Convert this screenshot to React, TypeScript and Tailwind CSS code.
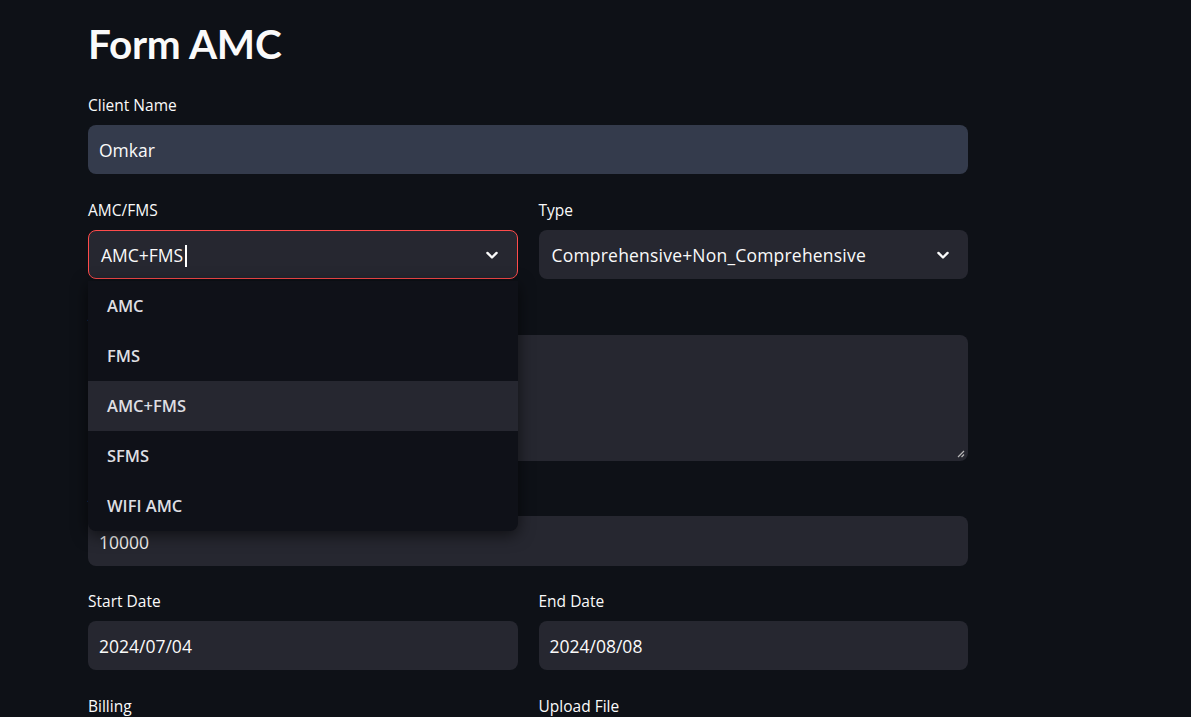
import React from 'react';

const options = ['AMC', 'FMS', 'AMC+FMS', 'SFMS', 'WIFI AMC'];

const Label: React.FC<{ text: string }> = ({ text }) => (
  <div className="h-6 flex items-center pt-[2px] text-[15.5px] text-[#fafafa] mb-2">{text}</div>
);

const Chevron: React.FC = () => (
  <svg width="20" height="20" viewBox="0 0 24 24" fill="none" stroke="#fafafa" strokeWidth="2.8" strokeLinecap="round" strokeLinejoin="round">
    <path d="M6.5 9.5l5.5 5.5 5.5-5.5" />
  </svg>
);

const App: React.FC = () => {
  return (
    <div className="min-h-[717px] w-full bg-[#0e1117] text-[#fafafa] overflow-hidden" style={{ fontFamily: '"Open Sans", "Noto Sans", sans-serif' }}>
      <div className="ml-[88px] w-[880px] pt-[14px] flex flex-col">
        <h1 className="text-[40.5px] font-bold leading-[60px] tracking-[-0.2px] mb-[19px]" style={{ fontFamily: 'Lato, sans-serif' }}>Form AMC</h1>

        <Label text="Client Name" />
        <div className="h-[49px] rounded-lg bg-[#343b4c] flex items-center pt-[2px] px-[11px] text-[17.5px]">Omkar</div>

        <div className="grid grid-cols-2 gap-x-[21px] mt-6">
          <div className="relative z-10">
            <Label text="AMC/FMS" />
            <div className="h-[49px] rounded-lg bg-[#262730] border border-[#ff4b4b] flex items-center justify-between pl-3 pr-[15px] text-[17.5px]">
              <div className="flex items-center pt-[2px]">
                <span>AMC+FMS</span>
                <span className="w-[1.5px] h-[22px] bg-white ml-[2px]" />
              </div>
              <Chevron />
            </div>
            <div className="absolute left-0 right-0 top-full mt-[2px] bg-[#0f1118] rounded-b-lg shadow-[0_4px_16px_rgba(0,0,0,0.6)] overflow-hidden">
              {options.map((o) => (
                <div
                  key={o}
                  className={`h-[50px] flex items-center pl-[19px] text-[16.5px] font-semibold text-[#dedee2] ${o === 'AMC+FMS' ? 'bg-[#262730]' : ''}`}
                >
                  {o}
                </div>
              ))}
            </div>
          </div>
          <div>
            <Label text="Type" />
            <div className="h-[49px] rounded-lg bg-[#262730] flex items-center justify-between pl-[13px] pr-[15px] text-[17.5px] tracking-[0.2px]">
              <span className="pt-[2px]">Comprehensive+Non_Comprehensive</span>
              <Chevron />
            </div>
          </div>
        </div>

        <div className="mt-6">
          <Label text="Address" />
          <div className="relative h-[126px] rounded-lg bg-[#262730]">
            <svg className="absolute right-[3px] bottom-[3px]" width="8" height="8" viewBox="0 0 8 8" stroke="#b8b8b8" strokeWidth="1.2">
              <path d="M1 7L7 1M4.5 7L7 4.5" />
            </svg>
          </div>
        </div>

        <div className="mt-[23px]">
          <Label text="Amount" />
          <div className="h-[50px] rounded-lg bg-[#262730] flex items-center pt-[2px] px-[11px] text-[17.5px]">10000</div>
        </div>

        <div className="grid grid-cols-2 gap-x-[21px] mt-[23px]">
          <div>
            <Label text="Start Date" />
            <div className="h-[49px] rounded-lg bg-[#262730] flex items-center pt-[2px] px-[11px] text-[17.5px]">2024/07/04</div>
          </div>
          <div>
            <Label text="End Date" />
            <div className="h-[49px] rounded-lg bg-[#262730] flex items-center pt-[2px] px-[11px] text-[17.5px]">2024/08/08</div>
          </div>
        </div>

        <div className="grid grid-cols-2 gap-x-[21px] mt-6">
          <Label text="Billing" />
          <Label text="Upload File" />
        </div>
      </div>
    </div>
  );
};

export default App;
